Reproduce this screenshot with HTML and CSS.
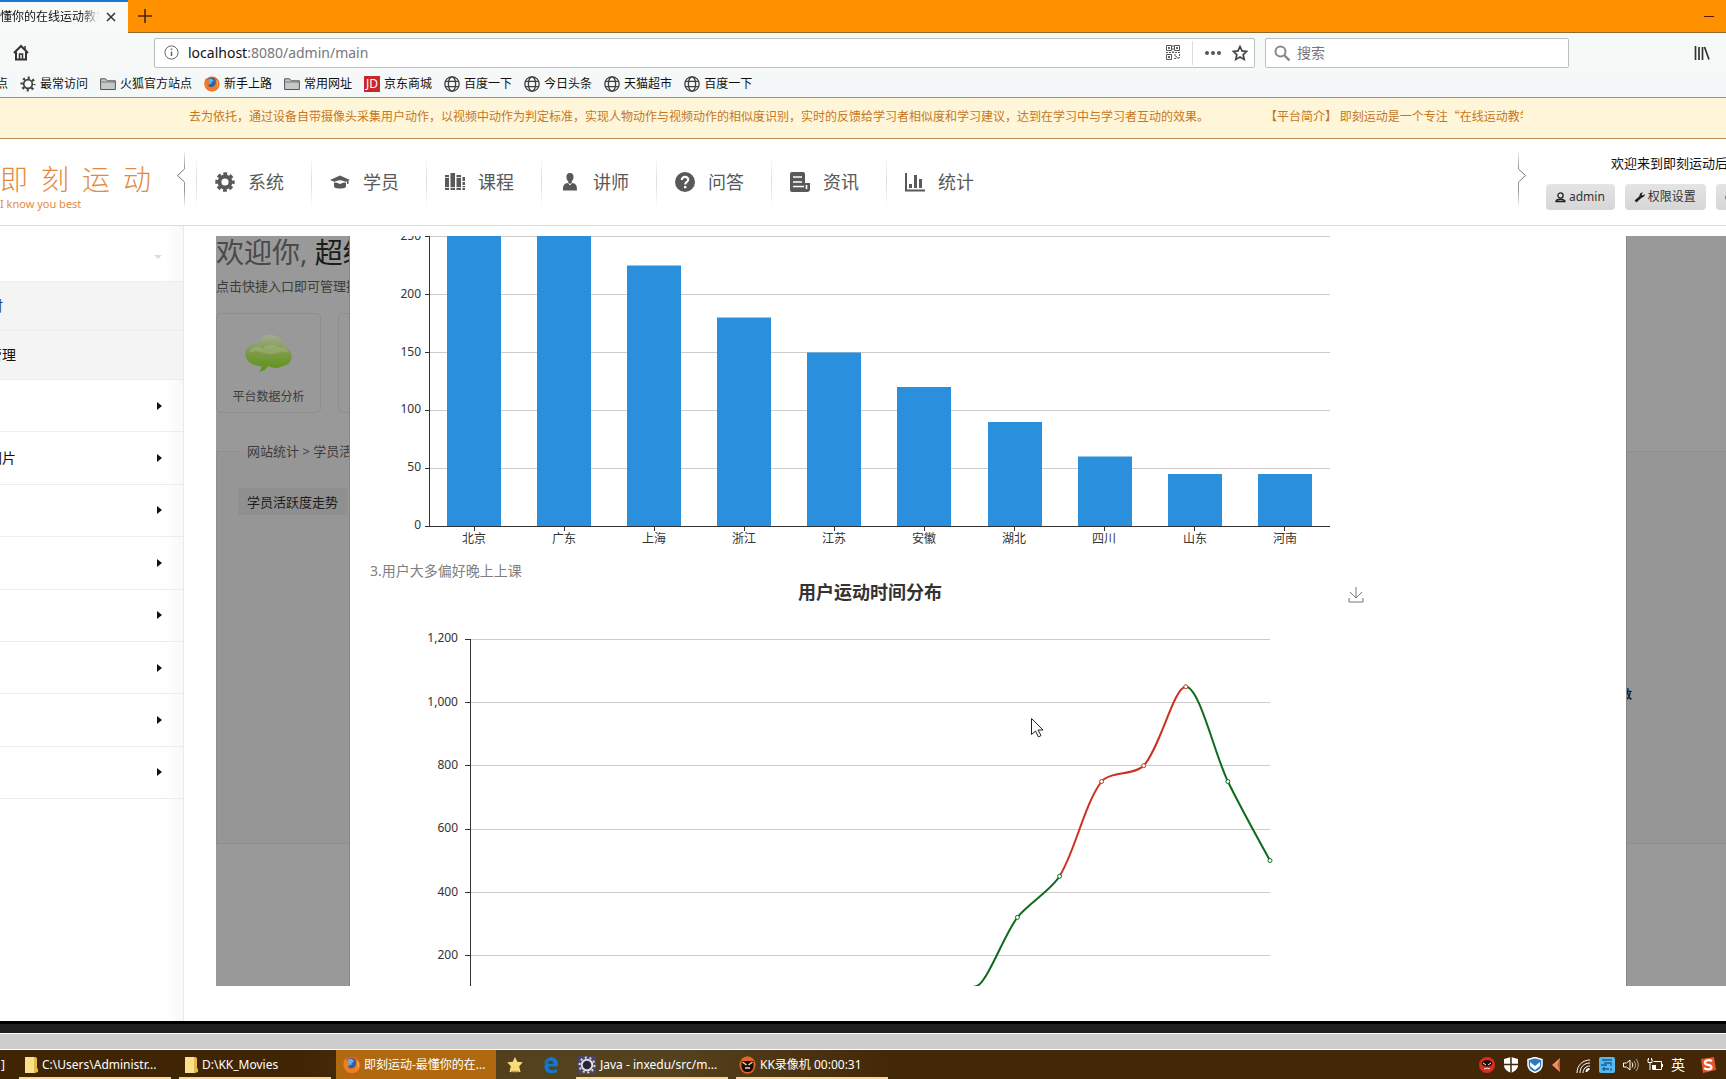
FILE: index.html
```html
<!DOCTYPE html>
<html lang="zh-CN">
<head>
<meta charset="utf-8">
<title>即刻运动-最懂你的在线运动教学平台</title>
<link rel="stylesheet" href="styles.css">
</head>
<body>
<svg class="defs" aria-hidden="true">
  <symbol id="globe" viewBox="0 0 16 16"><g fill="none" stroke="#3f3f3f" stroke-width="1.3"><circle cx="8" cy="8" r="7.2"/><ellipse cx="8" cy="8" rx="3.6" ry="7.2"/><path d="M1.5 5.3h13M1.5 10.7h13"/></g></symbol>
  <symbol id="folder" viewBox="0 0 16 16"><path d="M.6 13.5V2.8h5l1.6 2h8.2v8.7z" fill="#c3c9c6" stroke="#555" /><path d="M1 6h14" stroke="#777"/></symbol>
  <symbol id="gear" viewBox="0 0 20 20"><g fill="none" stroke="currentColor"><circle cx="10" cy="10" r="5.500" stroke-width="3.800"/><circle cx="10" cy="10" r="8.200" stroke-width="3" stroke-dasharray="3.800 2.640" stroke-dashoffset="1.900"/></g></symbol>
  <symbol id="gear-thin" viewBox="0 0 16 16"><g fill="none" stroke="#3f3f3f"><circle cx="8" cy="8" r="4.300" stroke-width="1.700"/><circle cx="8" cy="8" r="6.300" stroke-width="2.400" stroke-dasharray="2.100 2.850" stroke-dashoffset="1.050"/></g></symbol>
  <symbol id="firefox" viewBox="0 0 18 18"><circle cx="9" cy="9" r="8.500" fill="#e6601f"/><circle cx="8.500" cy="7.500" r="5.600" fill="#2c5fa5"/><path d="M5 3.500c3-2 6 0 6 3-2-1-3 .5-2 2-2 1-3-.5-4.500-2z" fill="#5fb4e6"/><path d="M.5 8c0-3 1-4 2-6 .5 2 1 2.500 3 3-1 2 0 3 2 3-1 3-3 2-3 2 1 3 5 3 7 1 2-2 2-5 1-8 5 3 6 9 1.500 12.500-6 4-13.500 0-13.500-7.500z" fill="#ef7d22"/><path d="M14 4c3 4 2 9-2 11 4-1 3-7 2-11z" fill="#ffd04a"/></symbol>
  <symbol id="book-file" viewBox="0 0 13 16"><path d="M0 0h9l3 1v14l-3 1H0z" fill="#fbe08c"/><path d="M9 0l3 1v10l1 1v3l-4 1z" fill="#e5b94f"/></symbol>
</svg>

<div class="tabbar">
  <div class="tab"><span class="tab-title">懂你的在线运动教学</span>
    <button class="icon-btn" aria-label="关闭标签页"><svg width="10" height="10" viewBox="0 0 10 10"><path d="M1 1l8 8M9 1l-8 8" stroke="#333" stroke-width="1.500"/></svg></button>
  </div>
  <button class="icon-btn new-tab" aria-label="新建标签页"><svg width="14" height="14" viewBox="0 0 14 14"><path d="M7 0v14M0 7h14" stroke="#4a2a00" stroke-width="1.600"/></svg></button>
  <button class="icon-btn minimize" aria-label="最小化"><svg width="10" height="10" viewBox="0 0 10 10"><path d="M0 5.500h10" stroke="#5a1600"/></svg></button>
</div>

<div class="toolbar">
  <button class="icon-btn home" aria-label="主页"><svg width="16" height="17" viewBox="0 0 16 17"><path d="M1 9l7-7 7 7M3 8v7.500h10V8" fill="none" stroke="#333" stroke-width="2"/><path d="M6.500 15V10h3v5M12 2v3" stroke="#333" stroke-width="1.500" fill="none"/></svg></button>
  <div class="urlbar">
    <svg width="15" height="15" viewBox="0 0 15 15"><circle cx="7.500" cy="7.500" r="6.600" fill="none" stroke="#666"/><path d="M7.500 6.500V11M7.500 3.500V5" stroke="#666" stroke-width="1.500"/></svg>
    <span class="url"><b>localhost</b>:8080/admin/main</span>
    <svg width="14" height="15" viewBox="0 0 14 15"><g fill="none" stroke="#555"><path d="M.5 .5h5v5h-5zM8.500 .5h5v5h-5zM.5 9.500h5v5h-5z"/><path d="M7 0v8M0 7.500h14M8 10h2v2h2v3M13.500 9v4M8 13.500h2" stroke-dasharray="2 1"/></g><path d="M2 2h2v2H2zM10 2h2v2h-2zM2 11h2v2H2z" fill="#666"/></svg>
    <span class="url-sep"></span>
    <svg class="dots" width="16" height="4" viewBox="0 0 16 4"><g fill="#555"><circle cx="2" cy="2" r="2"/><circle cx="8" cy="2" r="2"/><circle cx="14" cy="2" r="2"/></g></svg>
    <svg width="16" height="16" viewBox="0 0 16 16"><path d="M8 1.500l2 4.400 4.700.5-3.500 3.200 1 4.800L8 12l-4.200 2.400 1-4.800L1.300 6.400 6 5.900z" fill="none" stroke="#444" stroke-width="1.700"/></svg>
  </div>
  <div class="search">
    <svg width="16" height="16" viewBox="0 0 16 16"><circle cx="6.500" cy="6.500" r="5" fill="none" stroke="#888" stroke-width="2"/><path d="M10 10l5.500 5.500" stroke="#888" stroke-width="2.400"/></svg>
    <input type="text" placeholder="搜索" aria-label="搜索">
  </div>
  <button class="icon-btn library" aria-label="书库"><svg width="16" height="14" viewBox="0 0 16 14"><path d="M1.500 0v14M5 1v13M8.500 1v13M10.500 1l4.500 12.500" stroke="#333" stroke-width="1.700"/></svg></button>
</div>

<nav class="bookmarks" aria-label="书签">
  <a href="#">点</a>
  <a href="#"><svg class="i16"><use href="#gear-thin"/></svg>最常访问</a>
  <a href="#"><svg class="i16"><use href="#folder"/></svg>火狐官方站点</a>
  <a href="#"><svg class="i16"><use href="#firefox"/></svg>新手上路</a>
  <a href="#"><svg class="i16"><use href="#folder"/></svg>常用网址</a>
  <a href="#"><span class="jd">JD</span>京东商城</a>
  <a href="#"><svg class="i16"><use href="#globe"/></svg>百度一下</a>
  <a href="#"><svg class="i16"><use href="#globe"/></svg>今日头条</a>
  <a href="#"><svg class="i16"><use href="#globe"/></svg>天猫超市</a>
  <a href="#"><svg class="i16"><use href="#globe"/></svg>百度一下</a>
</nav>

<div class="notice"><div class="marquee">
  <span>去为依托，通过设备自带摄像头采集用户动作，以视频中动作为判定标准，实现人物动作与视频动作的相似度识别，实时的反馈给学习者相似度和学习建议，达到在学习中与学习者互动的效果。</span>
  <span>【平台简介】 即刻运动是一个专注“在线运动教学</span>
</div></div>

<header class="header">
  <a class="logo" href="#"><span class="logo-name"><span>即</span><span>刻</span><span>运</span><span>动</span></span><span class="logo-sub">I know you best</span></a>
  <svg class="bracket" width="9" height="58" viewBox="0 0 9 58"><path d="M7.500 0v19M7.500 32v26" stroke="#999"/><path d="M7.500 19l-7 6.500 7 6.500" fill="none" stroke="#777"/></svg>
  <nav class="menu" aria-label="主菜单">
    <a href="#"><svg viewBox="0 0 20 20"><use href="#gear"/></svg>系统</a>
    <a href="#"><svg viewBox="0 0 20 20"><path d="M10 3.500L0 8l10 4 7-2.800V12h1.500V8.500L20 8zM4 10.800c2-3 10-3 12 0V15c-3 2-9 2-12 0z" fill="currentColor"/><path d="M4.500 10.500c2.500-2 8.500-2 11 0" stroke="#fff" fill="none"/></svg>学员</a>
    <a href="#"><svg viewBox="0 0 20 20"><path d="M0 3h4v15H0zM5.500 1h4.500v17H5.500zM11.500 3H16v15h-4.500zM17.500 5H20v4h-2.500zM17.500 10H20v3h-2.500zM17.500 14H20v4h-2.500z" fill="currentColor"/><path d="M0 5.500h5M11 5.500h5M0 15.500h20" stroke="#fff" stroke-width=".8"/></svg>课程</a>
    <a href="#"><svg viewBox="0 0 20 20"><path d="M10 1c5 0 4 7 1.500 8.500L12 11c4 .5 5 2 5 7.500H3C3 13 4 11.500 8 11l.5-1.500C6 8 5 1 10 1z" fill="currentColor"/><path d="M8.500 11L10 13l1.500-2" stroke="#fff" fill="none"/></svg>讲师</a>
    <a href="#"><svg viewBox="0 0 20 20"><circle cx="10" cy="10" r="10" fill="currentColor"/><path d="M6.800 8c0-4.500 6.700-4 6.400 0-.2 2-3 2-3 4.500" fill="none" stroke="#fff" stroke-width="2.200"/><path d="M9 14h2.400v2.300H9z" fill="#fff"/></svg>问答</a>
    <a href="#"><svg viewBox="0 0 20 20"><path d="M2 0h11q2 0 2 2v9h5v6q0 3-3 3H2q-2 0-2-2V2q0-2 2-2z" fill="currentColor"/><path d="M3 5h9M3 10h9M3 14.500h11M16.500 13v4" stroke="#fff" stroke-width="1.700"/></svg>资讯</a>
    <a href="#"><svg viewBox="0 0 20 20"><path d="M0 1h2v16.500h18v2H0zM4 12h3v4H4zM9 3h3v13H9zM14 7h3v9h-3z" fill="currentColor"/></svg>统计</a>
  </nav>
  <svg class="bracket" width="9" height="58" viewBox="0 0 9 58"><path d="M.5 0v19M.5 32v26" stroke="#999"/><path d="M.5 19l7 6.500-7 6.500" fill="none" stroke="#777"/></svg>
  <div class="account">
    <p>欢迎来到即刻运动后台</p>
    <div class="account-btns">
      <button><svg width="11" height="11" viewBox="0 0 11 11"><circle cx="5.500" cy="3.500" r="2.600" fill="none" stroke="#222" stroke-width="1.300"/><path d="M1 9.500c0-3 9-3 9 0z" fill="none" stroke="#222" stroke-width="1.400"/></svg>admin</button>
      <button><svg width="11" height="11" viewBox="0 0 11 11"><path d="M1.500 9.500L7 4.500" stroke="#222" stroke-width="2.600"/><path d="M6 5C4.500 2 7 0 9 .5L7.500 2.500l1.500 1L10.700 2c.5 2-1.700 4.500-4.700 3z" fill="#222"/></svg>权限设置</button>
      <button><svg width="11" height="11" viewBox="0 0 11 11"><circle cx="5.500" cy="5.500" r="5" fill="#222"/></svg>退出</button>
    </div>
  </div>
</header>

<div class="body">
  <aside class="sidebar">
    <a class="side-head" href="#"><span></span><i class="down"></i></a>
    <a class="side-sub" href="#"><span class="side-text side-link">时</span></a>
    <a class="side-sub" href="#"><span class="side-text">管理</span></a>
    <div class="side-groups">
      <a href="#"><i></i></a>
      <a href="#"><span class="side-text">图片</span><i></i></a>
      <a href="#"><i></i></a>
      <a href="#"><i></i></a>
      <a href="#"><i></i></a>
      <a href="#"><i></i></a>
      <a href="#"><i></i></a>
      <a href="#"><i></i></a>
    </div>
  </aside>

  <main class="workspace">
    <div class="dashboard">
      <h1>欢迎你, <strong>超级管理员</strong></h1>
      <p>点击快捷入口即可管理操作</p>
      <div class="cards">
        <a class="card" href="#"><svg width="48" height="40" viewBox="0 0 48 40"><defs><linearGradient id="leaf" x1="0" y1="0" x2="0" y2="1"><stop offset="0" stop-color="#a3ad92"/><stop offset=".45" stop-color="#7f9a4c"/><stop offset="1" stop-color="#5b9410"/></linearGradient></defs><path d="M13 10C15 1 24-1 30 2c6 0 8 5 8 10 11 3 12 18 0 20-6 3-11 2-15 0-1 3-5 5-9 6 2-2 3-4 2-6C5 32-2 25 1 16c2-4 7-7 12-6z" fill="url(#leaf)"/><path d="M4 19c2-7 10-8 14-4 4-6 13-5 17-1 4-2 8 0 9 5-8-3-11 2-19 1-7 0-11-5-21-1z" fill="#b5bf92" opacity=".35"/></svg>平台数据分析</a>
        <a class="card" href="#"></a>
      </div>
      <fieldset>
        <legend>网站统计 &gt; 学员活跃度</legend>
        <button class="trend-tab">学员活跃度走势</button>
        <div class="trend-note">活跃人数</div>
      </fieldset>
    </div>

    <section class="modal">
      <svg class="chart" width="1000" height="323" viewBox="0 0 1000 323">
        <path class="grid" d="M60 .5h900M60 58.500h900M60 116.500h900M60 174.500h900M60 232.500h900"/>
        <path class="bars" d="M77 0h54v290H77zM167 0h54v290h-54zM257 29.500h54V290h-54zM347 81.500h54V290h-54zM437 116.500h54V290h-54zM527 151h54v139h-54zM618 186h54v104h-54zM708 220.500h54V290h-54zM798 238h54v52h-54zM888 238h54v52h-54z"/>
        <path class="axis" d="M59.500 0v290.500M55 .5h5M55 58.500h5M55 116.500h5M55 174.500h5M55 232.500h5M55 290.500h905M104.500 290v5M194.500 290v5M284.500 290v5M374.500 290v5M464.500 290v5M554.500 290v5M644.500 290v5M734.500 290v5M824.500 290v5M914.500 290v5"/>
        <g class="ylab"><text x="51" y="4">250</text><text x="51" y="62">200</text><text x="51" y="120">150</text><text x="51" y="177">100</text><text x="51" y="235">50</text><text x="51" y="293">0</text></g>
        <g class="xlab"><text x="104" y="307">北京</text><text x="194" y="307">广东</text><text x="284" y="307">上海</text><text x="374" y="307">浙江</text><text x="464" y="307">江苏</text><text x="554" y="307">安徽</text><text x="644" y="307">湖北</text><text x="734" y="307">四川</text><text x="825" y="307">山东</text><text x="915" y="307">河南</text></g>
      </svg>
      <p class="finding">3.用户大多偏好晚上上课</p>
      <svg class="chart" width="1000" height="480" viewBox="0 0 1000 480">
        <text class="chart-title" x="500" y="16">用户运动时间分布</text>
        <path d="M986 4v10M980 9l6 6 6-6M979 15v4h14v-4" fill="none" stroke="#777"/>
        <path class="grid" d="M100 56.500h800M100 119.500h800M100 182.500h800M100 246.500h800M100 309.500h800M100 372.500h800"/>
        <path class="axis" d="M100.500 56v380M95 56.500h5M95 119.500h5M95 182.500h5M95 246.500h5M95 309.500h5M95 372.500h5"/>
        <g class="ylab"><text x="88" y="59">1,200</text><text x="88" y="123">1,000</text><text x="88" y="186">800</text><text x="88" y="249">600</text><text x="88" y="313">400</text><text x="88" y="376">200</text></g>
        <g transform="translate(-370 -583)">
          <path class="line low" d="M968 990C971 987 973 986.500 975.300 986.500C986 986.500 1002.800 936.700 1017.400 917.400C1028 903.500 1050.400 891.100 1059.500 876.300"/>
          <path class="line high" d="M1059.500 876.300C1075.600 850.300 1084 804.700 1101.600 781.500C1109.200 771.500 1135.200 775.200 1143.700 765.700C1160.500 746.800 1174 686.700 1185.800 686.700"/>
          <path class="line low" d="M1185.800 686.700C1199.400 686.700 1214.300 753.500 1227.900 781.500C1239.600 805.600 1270 860.500 1270 860.500"/>
          <g class="low dot"><circle cx="1017.400" cy="917.400" r="2"/><circle cx="1059.500" cy="876.300" r="2"/><circle cx="1227.900" cy="781.500" r="2"/><circle cx="1270" cy="860.500" r="2"/></g>
          <g class="high dot"><circle cx="1101.600" cy="781.500" r="2"/><circle cx="1143.700" cy="765.700" r="2"/><circle cx="1185.800" cy="686.700" r="2"/></g>
          <path d="M1031.500 718.500v16l4-3.500 3 6 2.500-1.500-3-5.500h5z" fill="#fff" stroke="#222"/>
        </g>
      </svg>
    </section>
  </main>
</div>

<div class="window-edge"></div>
<div class="strip"></div>

<footer class="taskbar">
  <button class="task stub">]</button>
  <button class="task open"><svg width="13" height="16"><use href="#book-file"/></svg>C:\Users\Administr...</button>
  <button class="task open"><svg width="13" height="16"><use href="#book-file"/></svg>D:\KK_Movies</button>
  <button class="task active"><svg width="18" height="18"><use href="#firefox"/></svg>即刻运动-最懂你的在...</button>
  <button class="task pin" aria-label="收藏"><svg width="18" height="18" viewBox="0 0 18 18"><path d="M9 1l2.300 4.800 5.500.4-3.600 4 1.300 5.800H3.500l1.300-5.800-3.600-4 5.500-.4z" fill="#f8dc7c"/><path d="M5 15.500h8" stroke="#d99a36" stroke-width="1.500"/></svg></button>
  <button class="task pin" aria-label="Edge"><svg width="18" height="18" viewBox="0 0 18 18"><path d="M2 8C3-1 16-1 16 8v2.500H6.500c0 4 5 4.500 8.500 2.500v3C9 19 2 17 2.500 10 3 7 5 5.500 7.500 5 6 6 6.300 7 6.200 8h5.500C12 3.500 5 3.500 2 8z" fill="#1378cc"/></svg></button>
  <button class="task open java"><svg width="18" height="18" viewBox="0 0 18 18"><path d="M0 0h18v18H0z" fill="#4c4568"/><circle cx="9" cy="9" r="5.300" fill="#29213d" stroke="#ddd" stroke-width="2"/><circle cx="9" cy="9" r="7.500" fill="none" stroke="#ddd" stroke-width="2" stroke-dasharray="2 2.700"/></svg>Java - inxedu/src/m...</button>
  <button class="task open recorder"><svg width="17" height="18" viewBox="0 0 17 18"><ellipse cx="8.500" cy="9" rx="8" ry="8.700" fill="#e8632a"/><path d="M2.500 5h12v6c-1 4-3 5-6 5s-5-1-6-5z" fill="#180f0d"/><path d="M3.500 6l4 3M13.500 6l-4 3M6 12h5" stroke="#f6d5b0" stroke-width="1.500"/></svg>KK录像机 00:00:31</button>
  <div class="tray">
    <svg viewBox="0 0 16 16"><circle cx="8" cy="8" r="8" fill="#d92d20"/><path d="M2.500 6c2-4 9-4 11 0-1 5-10 5-11 0z" fill="#220c0a"/><path d="M4 6l3 2M12 6L9 8M5 12q3-2 6 0" stroke="#eee" fill="none"/></svg>
    <svg viewBox="0 0 16 16"><path d="M8 0l7 2v6c0 4-3 6-7 8-4-2-7-4-7-8V2z" fill="#fff"/><path d="M8 0v16M1 7.500h14" stroke="#432706" stroke-width="1.500"/></svg>
    <svg viewBox="0 0 16 16"><path d="M8 .5l7 2V8c0 4-3 6-7 7.500C4 14 1 12 1 8V2.500z" fill="#287ac2" stroke="#fff" stroke-width="1.500"/><path d="M3 5l5 4 5-4v4l-5 4-5-4z" fill="#fff"/></svg>
    <svg viewBox="0 0 16 16"><path d="M1 8l8-7v14z" fill="#f08f68"/><path d="M9 1L6.500 8 9 15z" fill="#c5552e"/></svg>
    <svg viewBox="0 0 16 16"><g fill="none" stroke="#fff"><path d="M2 16C2 8 8 3 15 3M5 16c0-6 4-10 10-10M8 16c0-4 3-7 7-7"/><path d="M11.500 15c0-1.500 1-3 3-3" stroke-width="2"/></g></svg>
    <svg viewBox="0 0 16 16"><rect width="16" height="16" rx="2" fill="#55b8ee"/><path d="M3 3h10M5 6h7v3M2 8h6M3 12h7M5 10v4M12 11v3" stroke="#195d99" stroke-width="1.300" fill="none"/></svg>
    <svg viewBox="0 0 16 16"><g fill="none" stroke="#fff"><path d="M.5 6h3L7 3v10l-3.500-3h-3zM9 5.500c1 2 1 3 0 5"/><path d="M11 4c2 3 2 5 0 8M13 2c3 4 3 8 0 12" opacity=".6"/></g></svg>
    <svg viewBox="0 0 16 16"><g fill="none" stroke="#fff"><path d="M6.500 4.500h8v8H5.500M15.500 7v3M1 2v3.500h4V2M3 5.500V13M1.500 1v2M4.500 1v2"/></g><path d="M5 8h4v4H5z" fill="#fff"/></svg>
    <span>英</span>
    <svg class="sogou" viewBox="0 0 16 16"><path d="M1 2l13-2 2 13-13 3z" fill="#e65325"/><path d="M12 4C9 2 4 3.500 5 6.500 6 8.500 11 7 11.500 10c0 3-5 3-7.500 1" fill="none" stroke="#fff" stroke-width="2.200"/></svg>
  </div>
</footer>
</body>
</html>
```
FILE: styles.css
```css
* { box-sizing: border-box; }

body {
  margin: 0;
  height: 100vh;
  display: flex;
  flex-direction: column;
  overflow: hidden;
  background: #fff;
  font: 12px/16px "Noto Sans", "Noto Sans CJK SC", sans-serif;
  color: #111;
}

a { color: inherit; text-decoration: none; }
p, h1 { margin: 0; font-weight: 400; }
svg { flex: none; display: block; }
button { font: inherit; color: inherit; border: 0; padding: 0; background: none; }
.defs { position: absolute; width: 0; height: 0; }
.i16 { width: 16px; height: 16px; }
.icon-btn { display: flex; }

/* Browser chrome */
.tabbar {
  flex: none;
  display: flex;
  align-items: center;
  height: 33px;
  background: #ff9000;
  border-bottom: 1px solid #8f6a2c;
}
.tab {
  display: flex;
  align-items: center;
  justify-content: space-between;
  width: 128px;
  height: 33px;
  padding: 0 12px 0 0;
  background: #f8f9f9;
  border-top: 2px solid #1b78d6;
}
.tab-title {
  width: 100px;
  overflow: hidden;
  white-space: nowrap;
  mask-image: linear-gradient(90deg, #000 80px, transparent 100px);
}
.new-tab { margin-left: 10px; }
.minimize { margin: 0 12px 0 auto; }

.toolbar {
  flex: none;
  display: flex;
  align-items: center;
  height: 39px;
  padding: 0 16px 0 13px;
  background: #f7f9f9;
}
.home { margin-right: 125px; }
.urlbar, .search {
  display: flex;
  align-items: center;
  height: 30px;
  border: 1px solid #b9c0c6;
  border-radius: 2px;
  background: #fff;
}
.urlbar { flex: 1; padding: 0 6px 0 9px; }
.url { flex: 1; margin-left: 9px; padding-top: 1px; font-size: 14px; line-height: 20px; color: #777; }
.url b { font-weight: 400; color: #111; }
.url-sep { width: 1px; height: 24px; margin: 0 12px; background: #ddd; }
.dots { margin-right: 11px; }
.search { width: 304px; margin: 0 125px 0 10px; padding: 0 8px; gap: 7px; }
.search input { flex: 1; min-width: 0; border: 0; padding: 1px 0 0; outline: 0; font: inherit; font-size: 14px; background: none; }
.search input::placeholder { color: #777; }

.bookmarks {
  flex: none;
  display: flex;
  gap: 12px;
  height: 26px;
  padding: 0 12px 1px 0;
  background: #f5f8f8;
  border-bottom: 1px solid #bf8a55;
}
.bookmarks a { display: flex; align-items: center; gap: 4px; white-space: nowrap; }
.bookmarks a:first-child { width: 8px; justify-content: flex-end; }
.jd { width: 16px; height: 16px; background: #c8272c; color: #fff; text-align: center; }

/* Notice banner */
.notice {
  flex: none;
  height: 41px;
  padding: 9px 203px 0 189px;
  background: #fff6d9;
  border-bottom: 1px solid #bd8a50;
  color: #c5761f;
  font-family: "Noto Sans CJK SC", sans-serif;
  line-height: 18px;
}
.marquee { display: flex; gap: 56px; overflow: hidden; white-space: nowrap; }
.marquee span { flex: none; }

/* Header */
.header {
  flex: none;
  display: flex;
  align-items: flex-start;
  height: 87px;
  border-bottom: 1px solid #ddd;
}
.logo { width: 177px; padding-top: 24px; color: #e28a3f; }
.logo-name { display: flex; gap: 13px; font-size: 28px; line-height: 32px; font-weight: 300; }
.logo-sub { display: block; font-size: 11px; line-height: 18px; }
.bracket { margin-top: 11px; mask-image: linear-gradient(transparent, #000 30%, #000 70%, transparent); }
.menu { display: flex; flex: 1; padding-left: 10px; }
.menu a {
  display: flex;
  align-items: center;
  gap: 13px;
  width: 115px;
  height: 50px;
  margin-top: 18px;
  padding-left: 18px;
  font-size: 18px;
  color: #595959;
  border-left: 1px solid;
  border-image: linear-gradient(transparent, #ddd, transparent) 1;
}
.menu svg { width: 20px; height: 20px; }
.account { width: 199px; overflow: hidden; padding: 15px 0 0 19px; }
.account p { padding-left: 65px; font-size: 13px; line-height: 18px; white-space: nowrap; }
.account-btns { display: flex; gap: 10px; margin-top: 12px; }
.account button {
  flex: none;
  display: flex;
  align-items: center;
  gap: 3px;
  height: 26px;
  padding: 0 10px 0 9px;
  border-radius: 4px;
  background: linear-gradient(#e4e4e4, #d6d6d6);
  color: #333;
}

/* Page body */
.body { flex: 1; min-height: 0; display: flex; }
.sidebar {
  flex: none;
  width: 184px;
  border-right: 1px solid #e9e9e9;
  background: linear-gradient(90deg, #fff 165px, #f8f8f8);
}
.sidebar a { display: flex; align-items: center; border-bottom: 1px solid #ececec; padding-right: 21px; }
.sidebar i {
  margin-left: auto;
  border: 4px solid transparent;
  border-left: 5px solid #111;
  border-right: 0;
}
.side-head { height: 56px; }
.side-head .down { border: 4px solid transparent; border-top-color: #ddd; border-bottom: 0; margin-top: 6px; }
.sidebar .side-sub { height: 49px; background: #f4f4f4; }
.side-text { width: 16px; display: flex; justify-content: flex-end; overflow: hidden; font-size: 14px; line-height: 18px; white-space: nowrap; }
.side-link { width: 3px; color: #234a78; }
.side-groups { display: grid; grid-auto-rows: 1fr; height: 419px; }

.workspace {
  flex: 1;
  min-width: 0;
  position: relative;
  overflow: hidden;
  margin: 10px 0 35px 32px;
  background: #999;
}
.dashboard { color: #3c3c3c; white-space: nowrap; }
h1 { font-size: 28px; line-height: 32px; color: #4a4a4a; }
h1 strong { font-weight: 400; color: #1c1c1c; }
.dashboard p { margin-top: 9px; font-size: 13px; line-height: 18px; }
.cards { display: flex; gap: 17px; margin-top: 18px; }
.card {
  display: flex;
  flex-direction: column;
  align-items: center;
  gap: 15px;
  width: 105px;
  height: 100px;
  padding-top: 20px;
  border: 1px solid #8e8e8e;
  border-radius: 5px;
}
fieldset {
  height: 402px;
  margin: 29px -20px 0 0;
  padding: 28px 113px 0 21px;
  border: 1px solid #8e8e8e;
  background: #969696;
}
legend { padding: 0 7px; margin-left: 2px; font-size: 13px; line-height: 18px; }
.trend-tab { display: block; height: 27px; padding: 0 9px; background: #8f8f8f; color: #1c1c1c; font-size: 13px; }
.trend-note { margin-top: 172px; text-align: right; font-weight: 700; color: #172228; }

.modal {
  position: absolute;
  inset: 0 100px 0 134px;
  overflow: hidden;
  padding-left: 20px;
  background: #fff;
  box-shadow: 0 0 0 1px #858585;
}
.chart { font-size: 12px; }
.grid { stroke: #ccc; fill: none; }
.axis { stroke: #333; fill: none; }
.bars { fill: #2a90dd; }
.ylab { text-anchor: end; fill: #333; }
.xlab { text-anchor: middle; fill: #333; }
.chart-title { font-size: 18px; font-weight: 700; text-anchor: middle; fill: #333; }
.line { fill: none; stroke-width: 2; }
.low { stroke: #0d6b1c; }
.high { stroke: #cb3020; }
.dot { fill: #fff; }
.finding { font-size: 14px; line-height: 24px; color: #808080; }

/* Window bottom and taskbar */
.window-edge { flex: none; height: 12px; border-top: 3px solid #000; background: #202020; }
.strip { flex: none; height: 17px; border: solid #fff; border-width: 1px 0; background: #cdcdcd; }
.taskbar {
  flex: none;
  display: flex;
  height: 29px;
  background: linear-gradient(90deg, #402504, #402504 300px, #54411d 520px, #54411d 680px, #432706 900px);
  color: #fff;
}
.task { display: flex; align-items: center; gap: 4px; white-space: nowrap; }
.open { width: 152px; margin-right: 8px; padding: 0 0 0 6px; border-bottom: 2px solid #f7d79d; border-top: 2px solid transparent; }
.stub { width: 5px; margin-right: 14px; justify-content: flex-end; }
.active { width: 160px; margin: 0 1px 0 -3px; padding-left: 7px; gap: 3px; background: #b0690f; }
.pin { width: 36px; justify-content: center; }
.java { margin-left: 7px; padding-left: 2px; }
.recorder { padding-left: 3px; }
.tray { display: flex; align-items: center; gap: 8px; margin-left: auto; padding-right: 10px; }
.tray svg { width: 16px; height: 16px; }
.tray span { width: 16px; font-size: 14px; }
.tray .sogou { margin-left: 5px; }
```
